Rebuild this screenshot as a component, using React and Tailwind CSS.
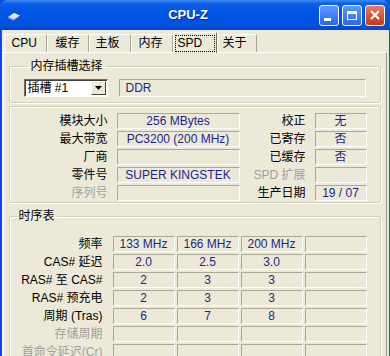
import React from 'react';

const field =
  'h-[16px] border border-t-[#aca899] border-l-[#aca899] border-b-white border-r-white text-[#1f1f8f] text-center leading-[14px] whitespace-nowrap overflow-hidden';

const groupBox = 'border border-[#d0d0bf] shadow-[1px_1px_0_#fff,inset_1px_1px_0_#fff] rounded-[2px] mx-0 min-w-0';

function TitleBar() {
  return (
    <div className="h-[30px] flex items-center rounded-t-[7px] bg-[linear-gradient(to_bottom,#3d8af7_0%,#0f5fe6_12%,#0055e5_40%,#0052dd_80%,#0a46c4_100%)]">
      <svg width="24" height="24" viewBox="0 0 24 24" className="ml-[3px]">
        <defs>
          <linearGradient id="ic" x1="0" y1="0" x2="0" y2="1">
            <stop offset="0" stopColor="#ffffff" />
            <stop offset="1" stopColor="#b9c6d8" />
          </linearGradient>
        </defs>
        <polygon points="5,14 11,10 17,12.5 11,17" fill="url(#ic)" />
        <polygon points="5,14 11,17 11,18 5,15" fill="#8a98b0" />
      </svg>
      <div className="flex-1 text-center text-white font-bold text-[13px] pl-[30px] [text-shadow:1px_1px_0_#0a2a8a]">CPU-Z</div>
      <div className="flex gap-[3px] mr-[5px]">
        <div className="w-[20px] h-[21px] rounded-[3px] border border-white bg-[linear-gradient(to_bottom,#5b9bff,#2a66e8)] relative">
          <div className="absolute left-[4px] bottom-[4px] w-[7px] h-[3px] bg-white" />
        </div>
        <div className="w-[20px] h-[21px] rounded-[3px] border border-white bg-[linear-gradient(to_bottom,#5b9bff,#2a66e8)] flex items-center justify-center">
          <div className="w-[10px] h-[9px] border border-white border-t-[3px]" />
        </div>
        <div className="w-[20px] h-[21px] rounded-[3px] border border-white bg-[linear-gradient(to_bottom,#ec7a5e,#c43a17)] flex items-center justify-center">
          <svg width="12" height="12" viewBox="0 0 12 12">
            <path d="M2 2 L10 10 M10 2 L2 10" stroke="#fff" strokeWidth="2" />
          </svg>
        </div>
      </div>
    </div>
  );
}

const tabs = [
  { label: 'CPU', w: 'w-[43px]', pl: 'pl-[7px]' },
  { label: '缓存', w: 'w-[42px]', pl: 'pl-[8px]' },
  { label: '主板', w: 'w-[42px]', pl: 'pl-[6px]' },
  { label: '内存', w: 'w-[42px]', pl: 'pl-[7px]' },
  { label: 'SPD', w: 'w-[44px]', pl: 'pl-[3px]', active: true },
  { label: '关于', w: 'w-[40px]', pl: 'pl-[5px]' },
];

function Tabs() {
  return (
    <div className="flex items-end h-[21px] pl-[2px] relative z-10">
      {tabs.map((t) =>
        t.active ? (
          <div
            key={t.label}
            className={`${t.w} h-[21px] bg-[#ece9d8] border-l border-t border-white border-r border-r-[#716f64] rounded-t-[2px] flex items-center px-[1px]`}
          >
            <span className="border border-dotted border-black px-[2px] leading-[15px] h-[17px] w-full">{t.label}</span>
          </div>
        ) : (
          <div
            key={t.label}
            className={`${t.w} ${t.pl} h-[18px] mb-[1px] border-l border-t border-white border-r border-r-[#aca899] rounded-t-[2px] leading-[16px]`}
          >
            {t.label}
          </div>
        )
      )}
    </div>
  );
}

const info = [
  ['模块大小', '256 MBytes', '校正', '无'],
  ['最大带宽', 'PC3200 (200 MHz)', '已寄存', '否'],
  ['厂商', '', '已缓存', '否'],
  ['零件号', 'SUPER KINGSTEK', 'SPD 扩展', '', true],
  ['序列号', '', '生产日期', '19 / 07'],
];

const timing = [
  ['频率', '133 MHz', '166 MHz', '200 MHz', ''],
  ['CAS# 延迟', '2.0', '2.5', '3.0', ''],
  ['RAS# 至 CAS#', '2', '3', '3', ''],
  ['RAS# 预充电', '2', '3', '3', ''],
  ['周期 (Tras)', '6', '7', '8', ''],
  ['存储周期', '', '', '', '', true],
  ['首命令延迟(Cr)', '', '', '', '', true],
];

export default function App() {
  return (
    <div className="w-[390px] h-[356px] overflow-hidden bg-[#0a48d6] text-[12px] text-black font-['Liberation_Sans','Noto_Sans_CJK_SC',sans-serif]">
      <TitleBar />
      <div className="flex h-[326px]">
        <div className="w-[4px] bg-[linear-gradient(to_right,#0831d9,#166aee)]" />
        <div className="flex-1 bg-[#ece9d8] pt-[2px]">
          <Tabs />
          <div className="-mt-[1px] ml-[1px] mr-[2px] h-[320px] border-l border-t border-white border-r border-r-[#919b9c] px-[5px] pt-[6px]">
            {/* 内存插槽选择 */}
            <fieldset className={`${groupBox} px-[14px] pb-[5px]`}>
              <legend className="ml-[4px] px-[3px] leading-[14px]">内存插槽选择</legend>
              <div className="flex mt-[6px] items-center">
                <div className="w-[84px] h-[18px] bg-white border border-t-[#716f64] border-l-[#716f64] border-b-white border-r-white shadow-[inset_1px_1px_0_#404040] flex items-center">
                  <span className="flex-1 pl-[3px] leading-[16px]">插槽 #1</span>
                  <div className="w-[15px] h-[14px] mr-[1px] bg-[#ece9d8] border border-t-white border-l-white border-b-[#404040] border-r-[#404040] flex items-center justify-center">
                    <svg width="7" height="4" viewBox="0 0 7 4">
                      <polygon points="0,0 7,0 3.5,4" fill="#000" />
                    </svg>
                  </div>
                </div>
                <div className={`${field} !text-left pl-[6px] ml-[11px] w-[247px] h-[18px] leading-[16px]`}>DDR</div>
              </div>
            </fieldset>

            {/* module info */}
            <div className={`${groupBox} mt-[3px] pt-[6px] pb-[1px] flex flex-col gap-[2px]`}>
              {info.map(([l, v, rl, rv, grayR], i) => (
                <div key={i} className="flex items-center h-[16px]">
                  <div className={`w-[98px] text-right leading-[16px] ${l === '序列号' ? 'text-[#a0a0a0]' : ''}`}>{l}</div>
                  <div className={`${field} ml-[9px] w-[123px]`}>{v}</div>
                  <div className={`w-[66px] text-right leading-[16px] ${grayR ? 'text-[#a0a0a0]' : ''}`}>{rl}</div>
                  <div className={`${field} ml-[9px] w-[52px]`}>{rv}</div>
                </div>
              ))}
            </div>

            {/* 时序表 */}
            <fieldset className={`${groupBox} mt-[6px] pb-[4px]`}>
              <legend className="ml-[7px] px-[2px] leading-[14px]">时序表</legend>
              <div className="mt-[13px] flex flex-col gap-[2px]">
                {timing.map(([l, a, b, c, d, gray], i) => (
                  <div key={i} className="flex items-center h-[16px]">
                    <div className={`w-[93px] text-right leading-[16px] whitespace-nowrap ${gray ? 'text-[#a0a0a0]' : ''}`}>{l}</div>
                    <div className="flex gap-[2px] ml-[10px]">
                      {[a, b, c, d].map((x, j) => (
                        <div key={j} className={`${field} w-[62px]`}>{x}</div>
                      ))}
                    </div>
                  </div>
                ))}
              </div>
            </fieldset>
          </div>
        </div>
        <div className="w-[4px] bg-[linear-gradient(to_right,#166aee,#0831d9)]" />
      </div>
    </div>
  );
}
